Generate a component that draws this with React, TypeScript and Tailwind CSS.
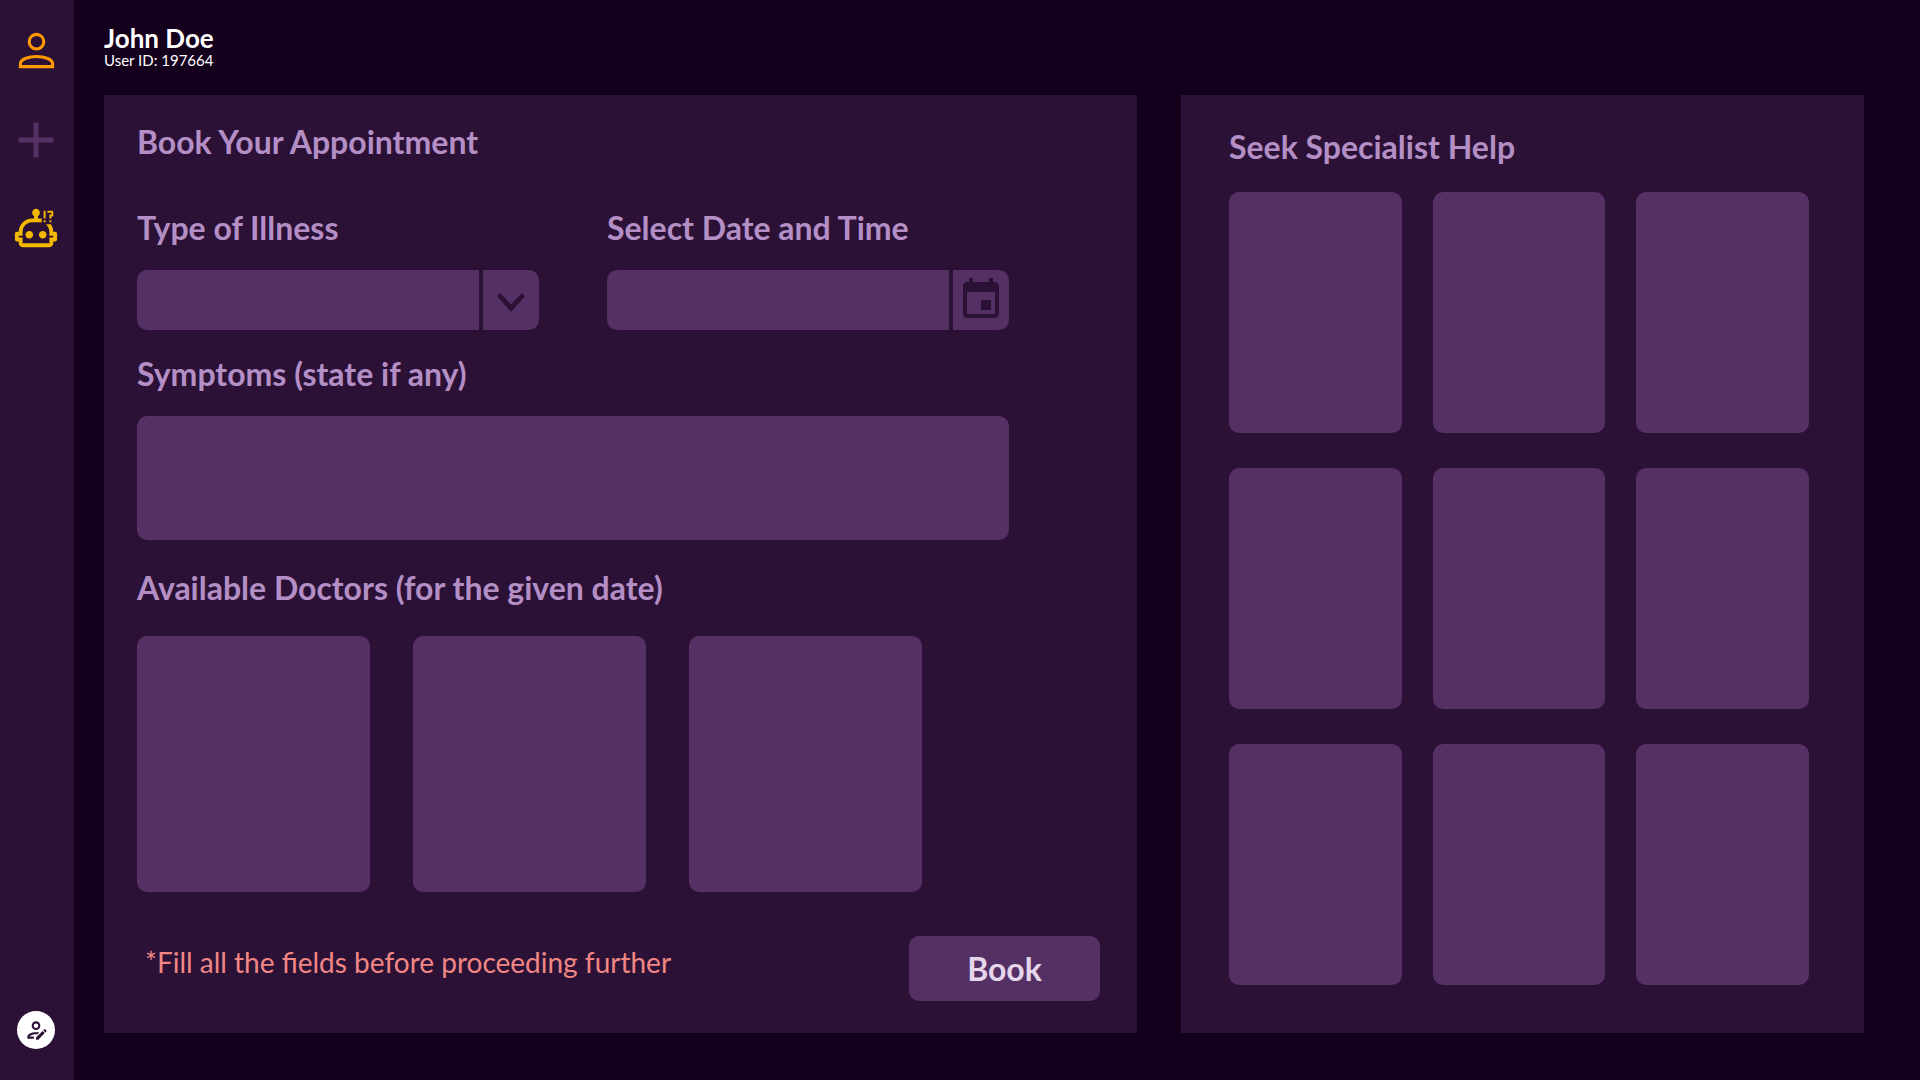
import { useId, type ReactNode } from "react";

const doctors = ["Doctor 1", "Doctor 2", "Doctor 3"];
const specialists = Array.from({ length: 9 }, (_, i) => `Specialist ${i + 1}`);

function Icon({ d, className }: { d: string; className: string }) {
  return (
    <svg viewBox="0 0 24 24" fill="currentColor" aria-hidden="true" className={className}>
      <path d={d} />
    </svg>
  );
}

function PersonIcon({ className }: { className: string }) {
  return (
    <svg
      viewBox="0 0 24 24"
      fill="none"
      stroke="currentColor"
      strokeWidth="1.4"
      aria-hidden="true"
      className={className}
    >
      <circle cx="12" cy="8" r="3.3" />
      <path d="M4.7 19.3V18c0-1.9 3.6-3.3 7.3-3.3s7.3 1.4 7.3 3.3v1.3z" />
    </svg>
  );
}

const icons = {
  plus: "M19 13h-6v6h-2v-6H5v-2h6V5h2v6h6v2z",
  robot:
    "M20 4H18V3H20.5C20.78 3 21 3.22 21 3.5V5.5C21 5.78 20.78 6 20.5 6H20V7H19V5H20V4M19 9H20V8H19V9M17 3H16V7H17V3M16 9H17V8H16V9M23 15V18C23 18.55 22.55 19 22 19H21V20C21 21.11 20.11 22 19 22H5C3.9 22 3 21.11 3 20V19H2C1.45 19 1 18.55 1 18V15C1 14.45 1.45 14 2 14H3C3 10.13 6.13 7 10 7H11V5.73C10.4 5.39 10 4.74 10 4C10 2.9 10.9 2 12 2S14 2.9 14 4C14 4.74 13.6 5.39 13 5.73V7H14C14.34 7 14.67 7.03 15 7.08V9.1C14.68 9.03 14.34 9 14 9H10C7.24 9 5 11.24 5 14V16H3V17H5V20H19V17H21V16H19V14C19 12.41 18.26 11 17.1 10H19.74C20.53 11.13 21 12.5 21 14H22C22.55 14 23 14.45 23 15M8.5 13.5C7.4 13.5 6.5 14.4 6.5 15.5S7.4 17.5 8.5 17.5 10.5 16.61 10.5 15.5 9.61 13.5 8.5 13.5M15.5 13.5C14.4 13.5 13.5 14.4 13.5 15.5S14.4 17.5 15.5 17.5 17.5 16.61 17.5 15.5 16.61 13.5 15.5 13.5Z",
  chevron: "M6 10.4 7.4 9l4.6 4.9L16.6 9l1.4 1.4-6 6.7z",
  calendar:
    "M17 12h-5v5h5v-5zM16 1v2H8V1H6v2H5c-1.11 0-1.99.9-1.99 2L3 19c0 1.1.89 2 2 2h14c1.1 0 2-.9 2-2V5c0-1.1-.9-2-2-2h-1V1h-2zm3 18H5V8h14v11z",
  userEdit:
    "M21.7 13.35l-1 1-2.05-2.05 1-1a.55.55 0 01.77 0l1.28 1.28c.21.21.21.56 0 .77M12 18.94l6.06-6.12 2.05 2.05L14.06 21H12v-2.06M12 14c-4.42 0-8 1.79-8 4v2h6v-1.89H5.9V18c0-.64 3.13-2.1 6.1-2.1.5 0 1 .04 1.5.1l1.6-1.6C14.1 14.1 13 14 12 14m0-10a4 4 0 100 8 4 4 0 000-8m0 1.9a2.1 2.1 0 110 4.2 2.1 2.1 0 010-4.2z",
};

function Field({
  label,
  icon,
  children,
}: {
  label: string;
  icon: string;
  children: (id: string) => ReactNode;
}) {
  const id = useId();
  return (
    <div className="flex-1">
      <label htmlFor={id} className="mb-6 block">
        {label}
      </label>
      <div className="flex h-[60px] gap-1">
        {children(id)}
        <button
          type="button"
          aria-label={`Open ${label}`}
          className="flex w-14 shrink-0 items-center justify-center rounded-r-[10px] bg-[#553064] text-[#2c1137]"
        >
          {icon === "chevron" ? (
            <Icon d={icons.chevron} className="size-14 shrink-0" />
          ) : (
            <Icon d={icons.calendar} className="size-12 shrink-0" />
          )}
        </button>
      </div>
    </div>
  );
}

const box = "min-w-0 flex-1 appearance-none rounded-l-[10px] bg-[#553064] px-4 text-xl outline-none";

export default function App() {
  return (
    <div className="flex min-h-screen bg-[#14001c] font-['Lato',sans-serif]">
      <nav className="flex w-[74px] shrink-0 flex-col items-center bg-[#2c1137] pt-6 pr-0.5 pb-[31px]">
        <a href="#profile" aria-label="Profile" className="text-[#ff9900]">
          <PersonIcon className="size-[53px]" />
        </a>
        <a href="#new" aria-label="New appointment" className="mt-[33px] text-[#553064]">
          <Icon d={icons.plus} className="size-[60px]" />
        </a>
        <a href="#assistant" aria-label="Assistant" className="mt-[35px] text-[#f2b900]">
          <Icon d={icons.robot} className="size-[46px]" />
        </a>
        <button
          type="button"
          aria-label="Edit profile"
          className="mt-auto flex size-[38px] items-center justify-center rounded-full bg-white text-[#2c1137]"
        >
          <Icon d={icons.userEdit} className="size-[26px]" />
        </button>
      </nav>

      <div className="flex flex-1 flex-col pr-14 pb-[47px] pl-[30px]">
        <header className="h-[95px] pt-6 text-white">
          <p className="text-[26px] leading-7 font-bold">John Doe</p>
          <p className="text-[15px] leading-4">User ID: 197664</p>
        </header>

        <main className="grid flex-1 grid-cols-[1033fr_683fr] gap-11 text-[32px] leading-9 font-bold text-[#b48fc5]">
          <form className="flex min-w-0 flex-col bg-[#2c1137] pt-[29px] pr-[37px] pb-8 pl-[33px]">
            <h1>Book Your Appointment</h1>
            <div className="mt-[50px] mr-[91px]">
              <div className="flex gap-[68px]">
                <Field label="Type of Illness" icon="chevron">
                  {(id) => (
                    <select id={id} className={box}>
                      <option value=""></option>
                    </select>
                  )}
                </Field>
                <Field label="Select Date and Time" icon="calendar">
                  {(id) => <input id={id} type="text" className={box} />}
                </Field>
              </div>
              <label htmlFor="symptoms" className="mt-[26px] mb-6 block">
                Symptoms (state if any)
              </label>
              <textarea
                id="symptoms"
                className="block h-[124px] w-full resize-none rounded-[10px] bg-[#553064] p-4 text-xl outline-none"
              />
            </div>
            <h2 className="mt-[30px]">Available Doctors (for the given date)</h2>
            <div className="mt-[30px] mr-[178px] grid grid-cols-3 gap-[43px]">
              {doctors.map((name) => (
                <button
                  key={name}
                  type="button"
                  aria-label={name}
                  className="h-64 rounded-[10px] bg-[#553064]"
                />
              ))}
            </div>
            <div className="mt-auto flex items-start justify-between pl-2">
              <p className="mt-2 text-[28px] font-normal text-[#f08784]">
                *Fill all the fields before proceeding further
              </p>
              <button
                type="submit"
                className="h-[65px] w-[191px] rounded-[10px] bg-[#553064] text-[#e5d6eb]"
              >
                Book
              </button>
            </div>
          </form>

          <section className="min-w-0 bg-[#2c1137] pt-[34px] pr-[55px] pb-12 pl-12">
            <h2>Seek Specialist Help</h2>
            <div className="mt-[27px] grid grid-cols-3 gap-x-[31px] gap-y-[35px]">
              {specialists.map((name) => (
                <button
                  key={name}
                  type="button"
                  aria-label={name}
                  className="h-[241px] rounded-[10px] bg-[#553064]"
                />
              ))}
            </div>
          </section>
        </main>
      </div>
    </div>
  );
}
